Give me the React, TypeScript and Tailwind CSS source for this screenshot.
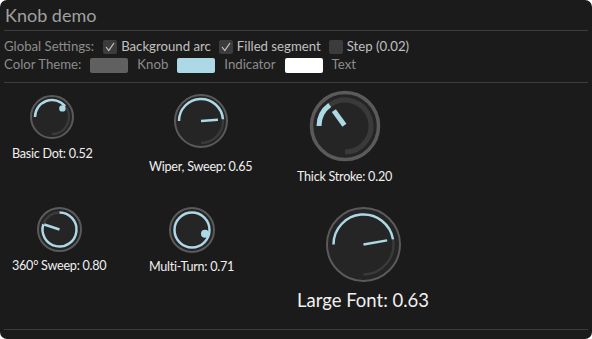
import React from "react";

type KnobProps = {
  ringR: number;
  ringW: number;
  arcR: number;
  arcW: number;
  start: number;
  sweep: number;
  value: number;
  indicator: "dot" | "line";
  dotR?: number;
  dotDist?: number;
  lineFrom?: number;
  lineTo?: number;
  lineW?: number;
  full?: boolean;
  indAngle?: number;
};

const BLUE = "#add8e6";

const pt = (cx: number, cy: number, r: number, deg: number) => {
  const a = (deg * Math.PI) / 180;
  return [cx + r * Math.cos(a), cy + r * Math.sin(a)];
};

const arc = (cx: number, cy: number, r: number, from: number, to: number) => {
  const [x1, y1] = pt(cx, cy, r, from);
  const [x2, y2] = pt(cx, cy, r, to);
  const large = to - from > 180 ? 1 : 0;
  return `M ${x1} ${y1} A ${r} ${r} 0 ${large} 1 ${x2} ${y2}`;
};

const Knob = (p: KnobProps) => {
  const size = Math.ceil(2 * (p.ringR + p.ringW));
  const c = size / 2;
  const end = p.start + p.value * p.sweep;
  const ang = p.indAngle ?? end;
  return (
    <svg width={size} height={size} viewBox={`0 0 ${size} ${size}`}>
      <circle cx={c} cy={c} r={p.ringR} fill="#252525" stroke="#5a5a5a" strokeWidth={p.ringW} />
      {p.full ? (
        <circle cx={c} cy={c} r={p.arcR} fill="none" stroke={BLUE} strokeWidth={p.arcW} />
      ) : (
        <>
          <path d={arc(c, c, p.arcR, end, p.start + p.sweep - 0.01)} fill="none" stroke="#3a3a3a" strokeWidth={p.arcW} />
          <path d={arc(c, c, p.arcR, p.start, end)} fill="none" stroke={BLUE} strokeWidth={p.arcW} />
        </>
      )}
      {p.indicator === "dot" ? (
        (() => {
          const [x, y] = pt(c, c, p.dotDist ?? 12, ang);
          return <circle cx={x} cy={y} r={p.dotR ?? 3} fill={BLUE} />;
        })()
      ) : (
        (() => {
          const [x1, y1] = pt(c, c, p.lineFrom ?? 0, ang);
          const [x2, y2] = pt(c, c, p.lineTo ?? 15, ang);
          return <line x1={x1} y1={y1} x2={x2} y2={y2} stroke={BLUE} strokeWidth={p.lineW ?? 2.5} />;
        })()
      )}
    </svg>
  );
};

const Check = ({ on }: { on: boolean }) => (
  <span className="w-[14px] h-[14px] rounded-[2px] bg-[#3c3c3c] flex items-center justify-center">
    {on && (
      <svg width="12" height="12" viewBox="0 0 12 12">
        <polyline points="2,6 4.8,9.5 10,2" fill="none" stroke="#c8c8c8" strokeWidth="1.2" />
      </svg>
    )}
  </span>
);

const Swatch = ({ color }: { color: string }) => (
  <span className="w-[38px] h-[15px] rounded-[2px]" style={{ backgroundColor: color }} />
);

export default function App() {
  return (
    <div className="w-[592px] h-[339px] bg-white">
      <div
        className="w-[592px] h-[339px] bg-[#1b1b1b] rounded-[7px] flex flex-col text-[#8c8c8c] text-[13.2px]"
        style={{ fontFamily: 'Lato, sans-serif' }}
      >
        <h1 className="pl-[5px] pt-[2px] h-[30px] text-[18px] leading-[26px] text-[#a0a0a0]">Knob demo</h1>
        <div className="mx-[4px] h-px bg-[#3c3c3c]" />

        <div className="px-[4px] pt-[8px] flex items-center h-[23px] gap-[8px]">
          <span>Global Settings:</span>
          <span className="flex items-center gap-[4px] ml-[1px] text-[#c0c0c0]">
            <Check on /> Background arc
          </span>
          <span className="flex items-center gap-[4px] text-[#c0c0c0]">
            <Check on /> Filled segment
          </span>
          <span className="flex items-center gap-[4px] text-[#c0c0c0]">
            <Check on={false} /> Step (0.02)
          </span>
        </div>
        <div className="px-[4px] flex items-center h-[22px] gap-[9px]">
          <span>Color Theme:</span>
          <Swatch color="#606060" />
          <span>Knob</span>
          <Swatch color="#add8e6" />
          <span>Indicator</span>
          <Swatch color="#ffffff" />
          <span>Text</span>
        </div>
        <div className="mx-[4px] mt-[6px] h-px bg-[#3c3c3c]" />

        <div className="grid grid-cols-[137px_148px_auto] grid-rows-[112px_auto] pl-[12px] pt-[5px] text-[#f0f0f0] text-[12.6px] tracking-[-0.25px] flex-1">
          <div className="justify-self-start flex flex-col items-center">
            <div className="mt-[6px]">
              <Knob ringR={21} ringW={2} arcR={17} arcW={2.5} start={180} sweep={270} value={0.52} indicator="dot" dotR={3.2} dotDist={13.5} />
            </div>
            <span className="mt-[6px] leading-[16px]">Basic Dot: 0.52</span>
          </div>
          <div className="justify-self-start flex flex-col items-center">
            <div className="mt-[5px]">
              <Knob ringR={26} ringW={2} arcR={22} arcW={2.5} start={180} sweep={270} value={0.65} indicator="line" lineFrom={0} lineTo={17} />
            </div>
            <span className="mt-[10px] leading-[16px]">Wiper, Sweep: 0.65</span>
          </div>
          <div className="justify-self-start flex flex-col items-center">
            <div className="mt-[1px]">
              <Knob ringR={33.5} ringW={3.5} arcR={26} arcW={5} start={180} sweep={270} value={0.2} indicator="line" lineFrom={1} lineTo={19} lineW={5} />
            </div>
            <span className="mt-[6px] leading-[16px]">Thick Stroke: 0.20</span>
          </div>

          <div className="justify-self-start flex flex-col items-center">
            <div className="mt-[6px]">
              <Knob ringR={21.5} ringW={2} arcR={17} arcW={2.5} start={270} sweep={360} value={0.8} indicator="line" lineFrom={0} lineTo={16} />
            </div>
            <span className="mt-[5px] leading-[16px]">360° Sweep: 0.80</span>
          </div>
          <div className="justify-self-start flex flex-col items-center">
            <div className="mt-[6px]">
              <Knob ringR={22} ringW={2} arcR={17.5} arcW={2.5} start={180} sweep={270} value={0.71} indicator="dot" full dotR={4} dotDist={13.5} indAngle={16} />
            </div>
            <span className="mt-[5px] leading-[16px]">Multi-Turn: 0.71</span>
          </div>
          <div className="justify-self-start flex flex-col items-center">
            <div className="mt-[6px]">
              <Knob ringR={36.5} ringW={2} arcR={30} arcW={2.5} start={180} sweep={270} value={0.63} indicator="line" lineFrom={0} lineTo={24} />
            </div>
            <span className="mt-[6px] text-[18.5px] tracking-normal leading-[22px]">Large Font: 0.63</span>
          </div>
        </div>
        <div className="mx-[4px] mb-[9px] h-px bg-[#3c3c3c]" />
      </div>
    </div>
  );
}
